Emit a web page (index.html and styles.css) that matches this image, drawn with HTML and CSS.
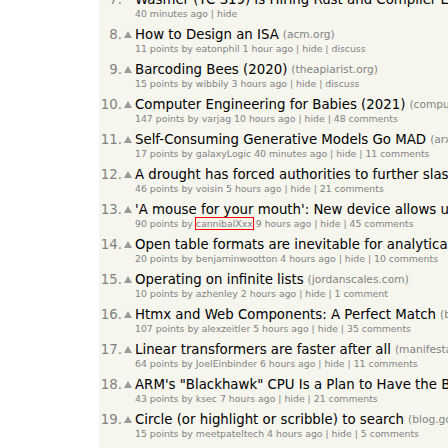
FILE: index.html
```html
<!DOCTYPE html>
<html>
<head>
<meta charset="utf-8">
<link rel="stylesheet" href="styles.css">
</head>
<body>
<div class="page">
  <div class="gutter"></div>
  <div class="main">
    <div class="list">
      <div class="item">
        <div class="titlerow"><span class="rank">7.</span><span class="vote"></span><span class="title">Wasmer (YC S19) Is Hiring Rust and Compiler Engineers</span></div>
        <div class="sub">40 minutes ago | hide</div>
      </div>
      <div class="item">
        <div class="titlerow"><span class="rank">8.</span><span class="vote"><i class="arrow"></i></span><span class="title">How to Design an ISA</span><span class="site">(acm.org)</span></div>
        <div class="sub">11 points by eatonphil 1 hour ago | hide | discuss</div>
      </div>
      <div class="item">
        <div class="titlerow"><span class="rank">9.</span><span class="vote"><i class="arrow"></i></span><span class="title">Barcoding Bees (2020)</span><span class="site">(theapiarist.org)</span></div>
        <div class="sub">15 points by wibbily 3 hours ago | hide | discuss</div>
      </div>
      <div class="item">
        <div class="titlerow"><span class="rank">10.</span><span class="vote"><i class="arrow"></i></span><span class="title">Computer Engineering for Babies (2021)</span><span class="site">(computerengineeringforbabies.com)</span></div>
        <div class="sub">147 points by varjag 10 hours ago | hide | 48 comments</div>
      </div>
      <div class="item">
        <div class="titlerow"><span class="rank">11.</span><span class="vote"><i class="arrow"></i></span><span class="title">Self-Consuming Generative Models Go MAD</span><span class="site">(arxiv.org)</span></div>
        <div class="sub">17 points by galaxyLogic 40 minutes ago | hide | 11 comments</div>
      </div>
      <div class="item">
        <div class="titlerow"><span class="rank">12.</span><span class="vote"><i class="arrow"></i></span><span class="title">A drought has forced authorities to further slash Panama Canal traffic</span><span class="site">(apnews.com)</span></div>
        <div class="sub">46 points by voisin 5 hours ago | hide | 21 comments</div>
      </div>
      <div class="item">
        <div class="titlerow"><span class="rank">13.</span><span class="vote"><i class="arrow"></i></span><span class="title">'A mouse for your mouth': New device allows users to control computers</span><span class="site">(theguardian.com)</span></div>
        <div class="sub">90 points by <span class="flag">cannibalXxx</span> 9 hours ago | hide | 45 comments</div>
      </div>
      <div class="item">
        <div class="titlerow"><span class="rank">14.</span><span class="vote"><i class="arrow"></i></span><span class="title">Open table formats are inevitable for analytical data</span><span class="site">(medium.com)</span></div>
        <div class="sub">20 points by benjaminwootton 4 hours ago | hide | 10 comments</div>
      </div>
      <div class="item">
        <div class="titlerow"><span class="rank">15.</span><span class="vote"><i class="arrow"></i></span><span class="title">Operating on infinite lists</span><span class="site">(jordanscales.com)</span></div>
        <div class="sub">10 points by azhenley 2 hours ago | hide | 1 comment</div>
      </div>
      <div class="item">
        <div class="titlerow"><span class="rank">16.</span><span class="vote"><i class="arrow"></i></span><span class="title">Htmx and Web Components: A Perfect Match</span><span class="site">(binaryigor.com)</span></div>
        <div class="sub">107 points by alexzeitler 5 hours ago | hide | 35 comments</div>
      </div>
      <div class="item">
        <div class="titlerow"><span class="rank">17.</span><span class="vote"><i class="arrow"></i></span><span class="title">Linear transformers are faster after all</span><span class="site">(manifestai.com)</span></div>
        <div class="sub">64 points by JoelEinbinder 6 hours ago | hide | 11 comments</div>
      </div>
      <div class="item">
        <div class="titlerow"><span class="rank">18.</span><span class="vote"><i class="arrow"></i></span><span class="title">ARM's "Blackhawk" CPU Is a Plan to Have the Best of Both Worlds</span><span class="site">(theregister.com)</span></div>
        <div class="sub">43 points by ksec 7 hours ago | hide | 21 comments</div>
      </div>
      <div class="item">
        <div class="titlerow"><span class="rank">19.</span><span class="vote"><i class="arrow"></i></span><span class="title">Circle (or highlight or scribble) to search</span><span class="site">(blog.google)</span></div>
        <div class="sub">15 points by meetpateltech 4 hours ago | hide | 5 comments</div>
      </div>
    </div>
  </div>
</div>
</body>
</html>
```
FILE: styles.css
```css
html, body {
  margin: 0;
  padding: 0;
  background: #ffffff;
  overflow: hidden;
  height: 100%;
}
.page {
  display: flex;
  height: 100%;
  font-family: "DejaVu Sans", Verdana, sans-serif;
}
.gutter {
  width: 99px;
  flex: none;
  background: #ffffff;
}
.main {
  flex: 1;
  background: #f6f6ef;
  overflow: hidden;
}
.list {
  margin-top: -8px;
}
.item {
  height: 35px;
  white-space: nowrap;
}
.titlerow {
  display: flex;
  align-items: center;
  height: 16px;
  font-size: 13.33px;
  line-height: 16px;
}
.rank {
  width: 23px;
  flex: none;
  text-align: right;
  color: #828282;
}
.vote {
  width: 12px;
  flex: none;
  display: flex;
  justify-content: center;
  align-items: center;
}
.arrow {
  display: block;
  width: 0;
  height: 0;
  border-left: 4.5px solid transparent;
  border-right: 4.5px solid transparent;
  border-bottom: 7px solid #9a9a9a;
  margin-top: -1px;
}
.title {
  color: #000000;
  margin-left: 1px;
}
.site {
  color: #828282;
  font-size: 10.67px;
  margin-left: 4px;
}
.sub {
  padding-left: 36px;
  font-size: 9.33px;
  line-height: 12px;
  color: #828282;
}
.flag {
  outline: 1px solid #ff0000;
  outline-offset: 0;
}
```
